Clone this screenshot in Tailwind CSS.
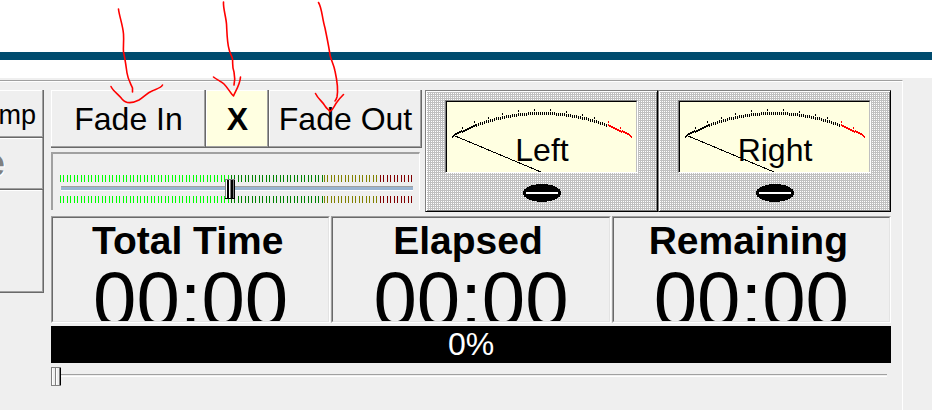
<!DOCTYPE html>
<html lang="en">
<head>
    <meta charset="UTF-8">
    <meta name="viewport" content="width=device-width, initial-scale=1.0">
    <title>Player Controls</title>
    <script src="https://cdn.jsdelivr.net/npm/@tailwindcss/browser@4"></script>
</head>
<body class="relative flex min-h-screen flex-col overflow-x-hidden bg-white font-['Liberation_Sans',Arial,sans-serif] text-black">
<header class="border-b-8 border-[#004b6e] pt-[52px]"></header>

<main class="mt-[18px] flex flex-1 flex-col bg-[#efefef] pt-[2px]">
    <div class="mr-[29px] flex flex-1 border-t border-r border-t-[#a0a0a0] border-r-white pt-[9px] pr-[11px] shadow-[inset_0_1px_#fff]">

        <!-- Left column, runs off the window -->
        <div class="w-[44px] shrink-0">
            <div class="flex h-[48px] justify-end overflow-hidden pt-1 pr-2 text-[27px] leading-[42px] shadow-[inset_-1px_-1px_#696969,inset_-2px_-2px_#a0a0a0,inset_0_1px_#fff]">mp</div>
            <div class="flex h-[52px] overflow-hidden text-[39px] leading-[50px] font-bold text-[#808080] shadow-[inset_-1px_-1px_#696969,inset_-2px_-2px_#a0a0a0,inset_0_1px_#fff]">
                <span class="flex w-[5px] justify-end [text-shadow:1px_1px_#fff]">e</span>
            </div>
            <div class="h-[103px] shadow-[inset_-1px_-1px_#696969,inset_-2px_-2px_#a0a0a0,inset_0_1px_#fff]"></div>
        </div>

        <div class="ml-[7px] min-w-0 flex-1">
            <div class="flex gap-[3px]">
                <div class="min-w-0 flex-[371]">
                    <!-- Fade buttons -->
                    <div class="flex text-[32px] leading-[58px] whitespace-nowrap">
                        <button type="button" class="flex-[155] shadow-[inset_-1px_-1px_#696969,inset_-2px_-2px_#a0a0a0,inset_1px_1px_#fff]">Fade In</button>
                        <button type="button" class="flex-[63] bg-[#ffffe1] font-bold shadow-[inset_-1px_-1px_#696969,inset_-2px_-2px_#a0a0a0,inset_1px_1px_#fff]">X</button>
                        <button type="button" class="flex-[153] shadow-[inset_-1px_-1px_#696969,inset_-2px_-2px_#a0a0a0,inset_1px_1px_#fff]">Fade Out</button>
                    </div>
                    <!-- Volume -->
                    <div class="mt-1 mr-[2px] flex flex-col border-t-2 border-r border-l-2 border-t-[#a0a0a0] border-r-white border-l-[#a0a0a0] pt-[21px] pr-[6px] pb-[7px] pl-[7px]">
                        <div class="flex h-[7px]">
                            <div class="flex-[171] bg-[repeating-linear-gradient(90deg,#00ff00_0_1px,transparent_1px_3px,#00ff00_3px_4px,transparent_4px_7px)]"></div>
                            <div class="flex-[93] bg-[repeating-linear-gradient(90deg,#008000_0_1px,transparent_1px_3px,#008000_3px_4px,transparent_4px_7px)]"></div>
                            <div class="flex-[56] bg-[repeating-linear-gradient(90deg,#808000_0_1px,transparent_1px_3px,#808000_3px_4px,transparent_4px_7px)]"></div>
                            <div class="flex-[33] bg-[repeating-linear-gradient(90deg,#800000_0_1px,transparent_1px_3px,#800000_3px_4px,transparent_4px_7px)]"></div>
                        </div>
                        <input type="range" min="0" max="100" value="48" aria-label="Volume" class="relative -my-[3px] ml-px block h-[20px] appearance-none bg-[linear-gradient(transparent_7px,#a0a0a0_7px_8px,#99b4d1_8px_11px,#fff_11px_12px,transparent_12px)] [&::-webkit-slider-thumb]:h-[20px] [&::-webkit-slider-thumb]:w-[10px] [&::-webkit-slider-thumb]:appearance-none [&::-webkit-slider-thumb]:border-y [&::-webkit-slider-thumb]:border-t-[#808080] [&::-webkit-slider-thumb]:border-b-black [&::-webkit-slider-thumb]:bg-[linear-gradient(90deg,#808080_1px,#fff_1px_2px,#000_2px_4px,#fff_4px_5px,#808080_5px_6px,#000_6px_8px,#808080_8px_9px,#000_9px)]">
                        <div class="flex h-[7px]">
                            <div class="flex-[171] bg-[repeating-linear-gradient(90deg,#00ff00_0_1px,transparent_1px_3px,#00ff00_3px_4px,transparent_4px_7px)]"></div>
                            <div class="flex-[93] bg-[repeating-linear-gradient(90deg,#008000_0_1px,transparent_1px_3px,#008000_3px_4px,transparent_4px_7px)]"></div>
                            <div class="flex-[56] bg-[repeating-linear-gradient(90deg,#808000_0_1px,transparent_1px_3px,#808000_3px_4px,transparent_4px_7px)]"></div>
                            <div class="flex-[33] bg-[repeating-linear-gradient(90deg,#800000_0_1px,transparent_1px_3px,#800000_3px_4px,transparent_4px_7px)]"></div>
                        </div>
                    </div>
                </div>

                <!-- VU meters -->
                <div class="grid min-w-0 flex-[466] grid-cols-2">
                    <div class="border border-t-[#808080] border-r-black border-b-black border-l-[#808080] bg-[conic-gradient(#fff_25%,#c0c0c0_0)] bg-size-[2px_2px] px-[19px] pt-[9px] pb-[9px] shadow-[inset_1px_1px_#fff,inset_-1px_-1px_#808080]">
                        <div class="border border-t-[#808080] border-r-white border-b-white border-l-[#808080]">
                            <svg class="meter block w-full border-t border-r border-l border-t-black border-r-[#c0c0c0] border-l-black bg-[#ffffe1]" viewBox="0 0 189 70" shape-rendering="crispEdges">
                                <g class="scale"></g>
                                <path d="M7 33.5L94 70" stroke="#000" fill="none"/>
                                <text x="95" y="59" text-anchor="middle" class="text-[32px]">Left</text>
                            </svg>
                        </div>
                        <svg class="mx-auto mt-[11px] block" width="38" height="18" viewBox="0 0 38 18" shape-rendering="crispEdges">
                            <ellipse cx="19" cy="9" rx="19" ry="9"/>
                            <path d="M3 8h32v1H3z" fill="#fff"/>
                            <path d="M3 9h32v1H3z" fill="#fff"/>
                        </svg>
                    </div>
                    <div class="border border-t-[#808080] border-r-black border-b-black border-l-[#808080] bg-[conic-gradient(#fff_25%,#c0c0c0_0)] bg-size-[2px_2px] px-[19px] pt-[9px] pb-[9px] shadow-[inset_1px_1px_#fff,inset_-1px_-1px_#808080]">
                        <div class="border border-t-[#808080] border-r-white border-b-white border-l-[#808080]">
                            <svg class="meter block w-full border-t border-r border-l border-t-black border-r-[#c0c0c0] border-l-black bg-[#ffffe1]" viewBox="0 0 189 70" shape-rendering="crispEdges">
                                <g class="scale"></g>
                                <path d="M7 33.5L94 70" stroke="#000" fill="none"/>
                                <text x="95" y="59" text-anchor="middle" class="text-[32px]">Right</text>
                            </svg>
                        </div>
                        <svg class="mx-auto mt-[11px] block" width="38" height="18" viewBox="0 0 38 18" shape-rendering="crispEdges">
                            <ellipse cx="19" cy="9" rx="19" ry="9"/>
                            <path d="M3 8h32v1H3z" fill="#fff"/>
                            <path d="M3 9h32v1H3z" fill="#fff"/>
                        </svg>
                    </div>
                </div>
            </div>

            <!-- Times -->
            <div class="mt-1 grid grid-cols-3 gap-px text-center whitespace-nowrap">
                <div class="border border-t-[#a0a0a0] border-r-white border-b-white border-l-[#a0a0a0]">
                    <div class="h-[105px] overflow-hidden border border-t-[#696969] border-r-[#e3e3e3] border-b-[#e3e3e3] border-l-[#696969]">
                        <h2 class="pr-1.5 text-[39px] leading-[46px] font-bold">Total Time</h2>
                        <p class="text-[78px] leading-[70px]">00:00</p>
                    </div>
                </div>
                <div class="border border-t-[#a0a0a0] border-r-white border-b-white border-l-[#a0a0a0]">
                    <div class="h-[105px] overflow-hidden border border-t-[#696969] border-r-[#e3e3e3] border-b-[#e3e3e3] border-l-[#696969]">
                        <h2 class="pr-1.5 text-[39px] leading-[46px] font-bold">Elapsed</h2>
                        <p class="text-[78px] leading-[70px]">00:00</p>
                    </div>
                </div>
                <div class="border border-t-[#a0a0a0] border-r-white border-b-white border-l-[#a0a0a0]">
                    <div class="h-[105px] overflow-hidden border border-t-[#696969] border-r-[#e3e3e3] border-b-[#e3e3e3] border-l-[#696969]">
                        <h2 class="pr-1.5 text-[39px] leading-[46px] font-bold">Remaining</h2>
                        <p class="text-[78px] leading-[70px]">00:00</p>
                    </div>
                </div>
            </div>

            <div role="progressbar" aria-label="Progress" aria-valuenow="0" aria-valuemin="0" aria-valuemax="100" class="mt-[3px] bg-black text-center text-[32px] leading-[37px] text-white">0%</div>

            <!-- Position -->
            <div class="mt-1 pr-1">
                <input type="range" min="0" max="100" value="0" aria-label="Position" class="block h-[19px] w-full appearance-none bg-[linear-gradient(transparent_7px,#a0a0a0_7px_8px,transparent_8px_9px,#fff_9px_10px,transparent_10px)] [&::-webkit-slider-thumb]:h-[19px] [&::-webkit-slider-thumb]:w-[10px] [&::-webkit-slider-thumb]:appearance-none [&::-webkit-slider-thumb]:border-y [&::-webkit-slider-thumb]:border-[#808080] [&::-webkit-slider-thumb]:bg-[linear-gradient(90deg,#808080_1px,#fff_1px_2px,#efefef_2px_4px,#808080_4px_5px,#fff_5px_6px,#efefef_6px_8px,#808080_8px_9px,#000_9px)]">
            </div>
        </div>
    </div>
</main>

<!-- Hand-drawn arrows over the buttons -->
<svg class="pointer-events-none absolute top-0 left-0" width="360" height="125" viewBox="0 0 360 125" fill="none" stroke="#ff0000" stroke-width="1.6" stroke-linecap="round" stroke-linejoin="round">
    <path d="M118.500 9C119 15 123 26 123.500 34C124 42 123 48 123.500 52C125 58 126 66 127 73C128 80 131 84 132.500 88V92"/>
    <path d="M111 86.500C113 91 119 95 122 99C126 104 133 103 139 100C144 97 147 93 152 91C156 89 161 88 162.500 85"/>
    <path d="M223.500 2C223 8 226 17 226.500 24C227 32 227 42 229 49C230 54 232 56 232.500 59C233 64 232 67 234 72C235 77 235 81 234 85"/>
    <path d="M213.500 77C217 80 221 81 224 84C228 88 231 94 233.500 96C235 92 240 85 240.500 77"/>
    <path d="M318.500 2.500C322 8 322 18 325 28C327 38 329 47 330 55C331 60 334 65 335 71C337 80 338 92 337 97C336 100 336 100 335 101"/>
    <path d="M315.500 93.500C318 99 323 102 325 106C327 109 329 110 330 111.500C333 110 334 106 337 102C339 99 341 97 343.500 94.500"/>
</svg>

<script>
    const NS = 'http://www.w3.org/2000/svg';
    const MAJOR = [15, 27, 41, 55, 71, 87, 103, 119, 135, 147, 161, 173];

    // height of the scale arc at x
    function arcY(x) {
        return 198 - Math.sqrt(187 * 187 - (x - 94) * (x - 94));
    }

    function addTick(group, x, y, height, color) {
        const rect = document.createElementNS(NS, 'rect');
        rect.setAttribute('x', x);
        rect.setAttribute('y', y);
        rect.setAttribute('width', 1);
        rect.setAttribute('height', height);
        rect.setAttribute('fill', color);
        group.appendChild(rect);
    }

    document.querySelectorAll('.meter .scale').forEach((group) => {
        for (let x = 5; x <= 183; x += 2) {
            const y = Math.round(arcY(x)) - 1;
            const color = x >= 161 ? '#ff0000' : '#000000';
            if (x >= 161) {
                // steep ends are stepped sideways
                addTick(group, x, y, 2, color);
                addTick(group, x + 1, y + 1, 2, color);
            } else if (x <= 27) {
                addTick(group, x + 1, y, 2, color);
                addTick(group, x, y + 1, 2, color);
            } else {
                addTick(group, x, y, 3, color);
            }
            if (MAJOR.includes(x)) addTick(group, x, y - 3, 2, color);
        }
    });
</script>
</body>
</html>
